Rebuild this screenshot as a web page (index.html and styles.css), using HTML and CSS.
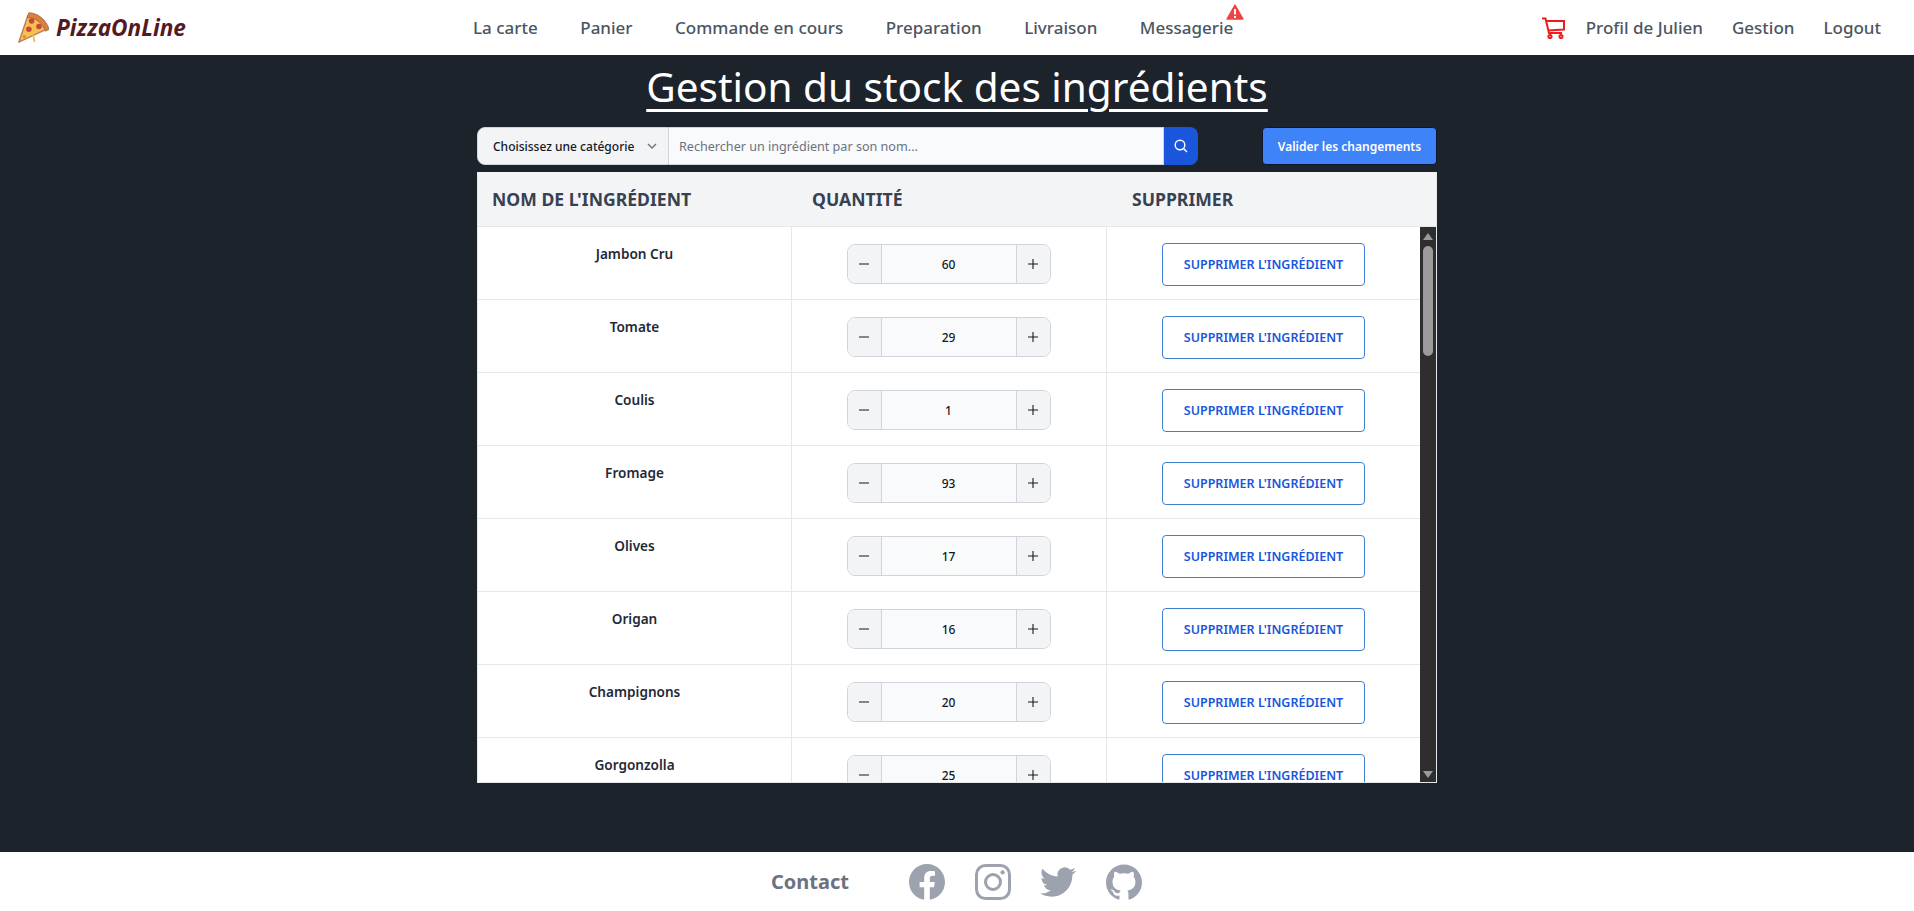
FILE: index.html
```html
<!DOCTYPE html>
<html lang="fr">
<head>
  <meta charset="UTF-8">
  <title>PizzaOnLine - Gestion du stock</title>
  <link rel="stylesheet" href="styles.css">
</head>
<body>

  <nav class="navbar">
    <a class="brand" href="#">
      <svg class="brand-logo" viewBox="0 0 36 36">
        <path d="M13 5 C21 5 30 11 33 20 L3 34 Z" fill="#f6bf4f" stroke="#b9805a" stroke-width="1.5" stroke-linejoin="round"/>
        <path d="M14 2 C23 2 33 9 36 20 L32 22 C29 13 21 7 12 7 Z" fill="#d8813f" stroke="#a8684a" stroke-width="1"/>
        <circle cx="17" cy="11" r="3" fill="#c9453f"/>
        <circle cx="25" cy="17" r="3" fill="#c9453f"/>
        <circle cx="14" cy="20" r="3" fill="#c9453f"/>
        <circle cx="9" cy="28" r="1.5" fill="#c9853f"/>
        <path d="M19 27 L20 33" stroke="#f6bf4f" stroke-width="2" stroke-linecap="round"/>
      </svg>
      <span>PizzaOnLine</span>
    </a>
    <ul class="nav-links">
      <li><a href="#">La carte</a></li>
      <li><a href="#">Panier</a></li>
      <li><a href="#">Commande en cours</a></li>
      <li><a href="#">Preparation</a></li>
      <li><a href="#">Livraison</a></li>
      <li class="has-alert">
        <a href="#">Messagerie</a>
        <svg class="alert-icon" viewBox="0 0 18 16">
          <path d="M9 1 L17 15 H1 Z" fill="#ef4444" stroke="#ef4444" stroke-width="1.4" stroke-linejoin="round"/>
          <path d="M9 5 V10.5 M9 12 V14" stroke="#fff" stroke-width="2"/>
        </svg>
      </li>
    </ul>
    <ul class="nav-right">
      <li class="cart">
        <svg class="cart-icon" viewBox="0 0 24 22" fill="none" stroke="#ef1c1c" stroke-width="2">
          <path d="M1 1.5 H4.5 L8 16 H21"/>
          <path d="M5.5 4 H23 V12.5 L7 13.5"/>
          <circle cx="9" cy="19.5" r="1.6"/>
          <circle cx="20" cy="19.5" r="1.6"/>
        </svg>
      </li>
      <li><a href="#">Profil de Julien</a></li>
      <li><a href="#">Gestion</a></li>
      <li><a href="#">Logout</a></li>
    </ul>
  </nav>

  <main class="content">
    <h1>Gestion du stock des ingrédients</h1>

    <div class="panel">
      <div class="toolbar">
        <form class="search">
          <button type="button" class="category">
            Choisissez une catégorie
            <svg viewBox="0 0 12 12" fill="none" stroke="#6b7280" stroke-width="1.4"><path d="M2 4 L6 8 L10 4"/></svg>
          </button>
          <input type="text" placeholder="Rechercher un ingrédient par son nom...">
          <button type="button" class="search-btn">
            <svg viewBox="0 0 16 16" fill="none" stroke="#fff" stroke-width="1.4"><circle cx="7" cy="7" r="4.8"/><path d="M10.5 10.5 L14 14"/></svg>
          </button>
        </form>
        <button type="button" class="validate">Valider les changements</button>
      </div>

      <div class="stock">
        <div class="stock-head">
          <div>NOM DE L'INGRÉDIENT</div>
          <div>QUANTITÉ</div>
          <div>SUPPRIMER</div>
        </div>
        <div class="stock-body">
          <div class="rows" id="rows"></div>
          <div class="scrollbar">
            <span class="arrow up"></span>
            <span class="track"><span class="thumb"></span></span>
            <span class="arrow down"></span>
          </div>
        </div>
      </div>
    </div>
  </main>

  <footer class="footer">
    <span class="contact">Contact</span>
    <div class="socials">
      <svg viewBox="0 0 24 24"><path d="M24 12c0-6.627-5.373-12-12-12S0 5.373 0 12c0 5.99 4.388 10.954 10.125 11.854v-8.385H7.078V12h3.047V9.356c0-3.007 1.792-4.668 4.533-4.668 1.312 0 2.686.234 2.686.234v2.953H15.83c-1.491 0-1.956.925-1.956 1.874V12h3.328l-.532 3.469h-2.796v8.385C19.612 22.954 24 17.99 24 12z"/></svg>
      <svg viewBox="0 0 24 24" fill="none" stroke="#9ca3af" stroke-width="2"><rect x="1" y="1" width="22" height="22" rx="6"/><circle cx="12" cy="12" r="5"/><circle cx="18.4" cy="5.6" r="1.4" fill="#9ca3af" stroke="none"/></svg>
      <svg viewBox="0 0 24 24"><path d="M23.953 4.57a10 10 0 01-2.825.775 4.958 4.958 0 002.163-2.723c-.951.555-2.005.959-3.127 1.184a4.92 4.92 0 00-8.384 4.482C7.69 8.095 4.067 6.13 1.64 3.162a4.822 4.822 0 00-.666 2.475c0 1.71.87 3.213 2.188 4.096a4.904 4.904 0 01-2.228-.616v.06a4.923 4.923 0 003.946 4.827 4.996 4.996 0 01-2.212.085 4.936 4.936 0 004.604 3.417 9.867 9.867 0 01-6.102 2.105c-.39 0-.779-.023-1.17-.067a13.995 13.995 0 007.557 2.209c9.053 0 13.998-7.496 13.998-13.985 0-.21 0-.42-.015-.63A9.935 9.935 0 0024 4.59z"/></svg>
      <svg viewBox="0 0 24 24"><path d="M12 .297c-6.63 0-12 5.373-12 12 0 5.303 3.438 9.8 8.205 11.385.6.113.82-.258.82-.577 0-.285-.01-1.04-.015-2.04-3.338.724-4.042-1.61-4.042-1.61C4.422 18.07 3.633 17.7 3.633 17.7c-1.087-.744.084-.729.084-.729 1.205.084 1.838 1.236 1.838 1.236 1.07 1.835 2.809 1.305 3.495.998.108-.776.417-1.305.76-1.605-2.665-.3-5.466-1.332-5.466-5.93 0-1.31.465-2.38 1.235-3.22-.135-.303-.54-1.523.105-3.176 0 0 1.005-.322 3.3 1.23.96-.267 1.98-.399 3-.405 1.02.006 2.04.138 3 .405 2.28-1.552 3.285-1.23 3.285-1.23.645 1.653.24 2.873.12 3.176.765.84 1.23 1.91 1.23 3.22 0 4.61-2.805 5.625-5.475 5.92.42.36.81 1.096.81 2.22 0 1.606-.015 2.896-.015 3.286 0 .315.21.69.825.57C20.565 22.092 24 17.592 24 12.297c0-6.627-5.373-12-12-12"/></svg>
    </div>
  </footer>

  <script>
    const ingredients = [
      ['Jambon Cru', 60], ['Tomate', 29], ['Coulis', 1], ['Fromage', 93],
      ['Olives', 17], ['Origan', 16], ['Champignons', 20], ['Gorgonzolla', 25]
    ];

    document.getElementById('rows').innerHTML = ingredients.map(([name, qty]) => `
      <div class="row">
        <div class="cell-name">${name}</div>
        <div class="cell-qty">
          <div class="stepper">
            <button type="button"><svg viewBox="0 0 12 12"><path d="M1 6 H11"/></svg></button>
            <span class="qty">${qty}</span>
            <button type="button"><svg viewBox="0 0 12 12"><path d="M1 6 H11 M6 1 V11"/></svg></button>
          </div>
        </div>
        <div class="cell-del"><button type="button" class="delete">SUPPRIMER L'INGRÉDIENT</button></div>
      </div>
    `).join('');
  </script>

</body>
</html>
```

FILE: styles.css
```css
* {
  box-sizing: border-box;
}
body {
  margin: 0;
  height: 100vh;
  display: flex;
  flex-direction: column;
  font-family: "Noto Sans", "Open Sans", sans-serif;
  background-color: #1c232b;
  overflow: hidden;
}
ul {
  list-style: none;
  margin: 0;
  padding: 0;
}
a {
  text-decoration: none;
  color: inherit;
}
button {
  font-family: inherit;
  cursor: pointer;
}

/* Navbar */
.navbar {
  height: 55px;
  flex-shrink: 0;
  background: #fff;
  display: flex;
  align-items: center;
  padding: 0 33px 0 16px;
}
.brand {
  display: flex;
  align-items: center;
  gap: 7px;
  width: 457px;
  color: #541a22;
  font-size: 22.6px;
  font-weight: 700;
  font-style: italic;
}
.brand-logo {
  width: 33px;
  height: 33px;
}
.nav-links {
  display: flex;
  gap: 42.5px;
  color: #4b5563;
  font-size: 17px;
  font-weight: 500;
}
.has-alert {
  position: relative;
}
.alert-icon {
  position: absolute;
  top: -12px;
  right: -11px;
  width: 18px;
  height: 16px;
}
.nav-right {
  margin-left: auto;
  display: flex;
  align-items: center;
  gap: 29px;
  color: #4b5563;
  font-size: 17px;
  font-weight: 500;
}
.cart {
  margin-right: -8px;
}
.cart-icon {
  display: block;
  width: 24px;
  height: 22px;
}

/* Main */
.content {
  flex: 1;
  display: flex;
  flex-direction: column;
  align-items: center;
  min-height: 0;
}
h1 {
  margin: 4px 0 0;
  height: 68px;
  color: #fff;
  font-size: 40.5px;
  font-weight: 400;
  line-height: 56px;
  text-decoration: underline;
  text-decoration-thickness: 3px;
  text-underline-offset: 7px;
}
.panel {
  width: 960px;
}
.toolbar {
  display: flex;
  justify-content: space-between;
  align-items: center;
  height: 38px;
  margin-bottom: 7px;
}
.search {
  display: flex;
  width: 721px;
  height: 38px;
}
.category {
  width: 192px;
  display: flex;
  align-items: center;
  justify-content: space-between;
  padding: 0 10px 0 15px;
  background: #f3f4f6;
  border: 1px solid #d1d5db;
  border-radius: 8px 0 0 8px;
  color: #111827;
  font-size: 12px;
  font-weight: 500;
}
.category svg {
  width: 12px;
  height: 12px;
}
.search input {
  flex: 1;
  min-width: 0;
  padding: 0 10px;
  background: #f9fafb;
  border: 1px solid #d1d5db;
  border-left: none;
  font-family: inherit;
  font-size: 12.6px;
}
.search input::placeholder {
  color: #6b7280;
}
.search-btn {
  width: 34px;
  padding: 0;
  background: #1a56db;
  border: none;
  border-radius: 0 8px 8px 0;
  display: flex;
  align-items: center;
  justify-content: center;
}
.search-btn svg {
  width: 16px;
  height: 16px;
}
.validate {
  width: 175px;
  height: 38px;
  background: #3f83f8;
  border: 1px solid #0b1730;
  border-radius: 4px;
  color: #fff;
  font-size: 12px;
  font-weight: 600;
}

/* Stock table */
.stock {
  height: 611px;
  display: flex;
  flex-direction: column;
  background: #fff;
  border: 1px solid #e5e7eb;
  border-top: none;
  overflow: hidden;
}
.stock-head {
  height: 55px;
  flex-shrink: 0;
  display: grid;
  grid-template-columns: 320px 320px 1fr;
  align-items: center;
  padding-left: 14px;
  background: #f3f4f6;
  border-bottom: 1px solid #e5e7eb;
  color: #374151;
  font-size: 17.6px;
  font-weight: 700;
}
.stock-body {
  flex: 1;
  min-height: 0;
  display: flex;
}
.rows {
  flex: 1;
  min-width: 0;
  overflow: hidden;
}
.row {
  height: 73px;
  display: grid;
  grid-template-columns: 314px 315px 1fr;
  border-bottom: 1px solid #e5e7eb;
}
.cell-name {
  padding-top: 17px;
  text-align: center;
  color: #1f2937;
  font-size: 13.6px;
  font-weight: 600;
  border-right: 1px solid #e5e7eb;
}
.cell-qty {
  display: flex;
  justify-content: center;
  padding: 17px 1px 0 0;
  border-right: 1px solid #e5e7eb;
}
.stepper {
  display: flex;
  width: 204px;
  height: 40px;
  border: 1px solid #d1d5db;
  border-radius: 8px;
  overflow: hidden;
}
.stepper button {
  width: 33px;
  padding: 0;
  background: #f3f4f6;
  border: none;
  display: flex;
  align-items: center;
  justify-content: center;
}
.stepper svg {
  width: 12px;
  height: 12px;
  fill: none;
  stroke: #111827;
  stroke-width: 1.1;
}
.qty {
  flex: 1;
  background: #f9fafb;
  border-left: 1px solid #d1d5db;
  border-right: 1px solid #d1d5db;
  display: flex;
  align-items: center;
  justify-content: center;
  color: #111827;
  font-size: 12px;
  font-weight: 500;
}
.cell-del {
  padding-top: 16px;
  padding-left: 55px;
}
.delete {
  width: 203px;
  height: 43px;
  padding: 0;
  background: #fff;
  border: 1px solid #3f7fd0;
  border-radius: 4px;
  color: #1a56db;
  font-size: 12.5px;
  font-weight: 600;
}

/* Fake scrollbar */
.scrollbar {
  width: 16px;
  flex-shrink: 0;
  background: #2e2e2e;
  display: flex;
  flex-direction: column;
  align-items: center;
}
.track {
  flex: 1;
  width: 100%;
  padding: 0 3px;
}
.thumb {
  display: block;
  height: 110px;
  border-radius: 5px;
  background: #9b9b9b;
}
.arrow {
  width: 0;
  height: 0;
  border-left: 5px solid transparent;
  border-right: 5px solid transparent;
}
.arrow.up {
  margin: 6px 0;
  border-bottom: 7px solid #9b9b9b;
}
.arrow.down {
  margin: 6px 0 4px;
  border-top: 7px solid #9b9b9b;
}

/* Footer */
.footer {
  height: 59px;
  flex-shrink: 0;
  background: #fff;
  display: flex;
  align-items: center;
  padding-left: 771px;
  gap: 60px;
}
.contact {
  color: #6b7280;
  font-size: 20px;
  font-weight: 700;
}
.socials {
  display: flex;
  gap: 29.5px;
}
.socials svg {
  width: 36px;
  height: 36px;
  fill: #9ca3af;
}
.socials svg:nth-child(2) {
  fill: none;
}
```
